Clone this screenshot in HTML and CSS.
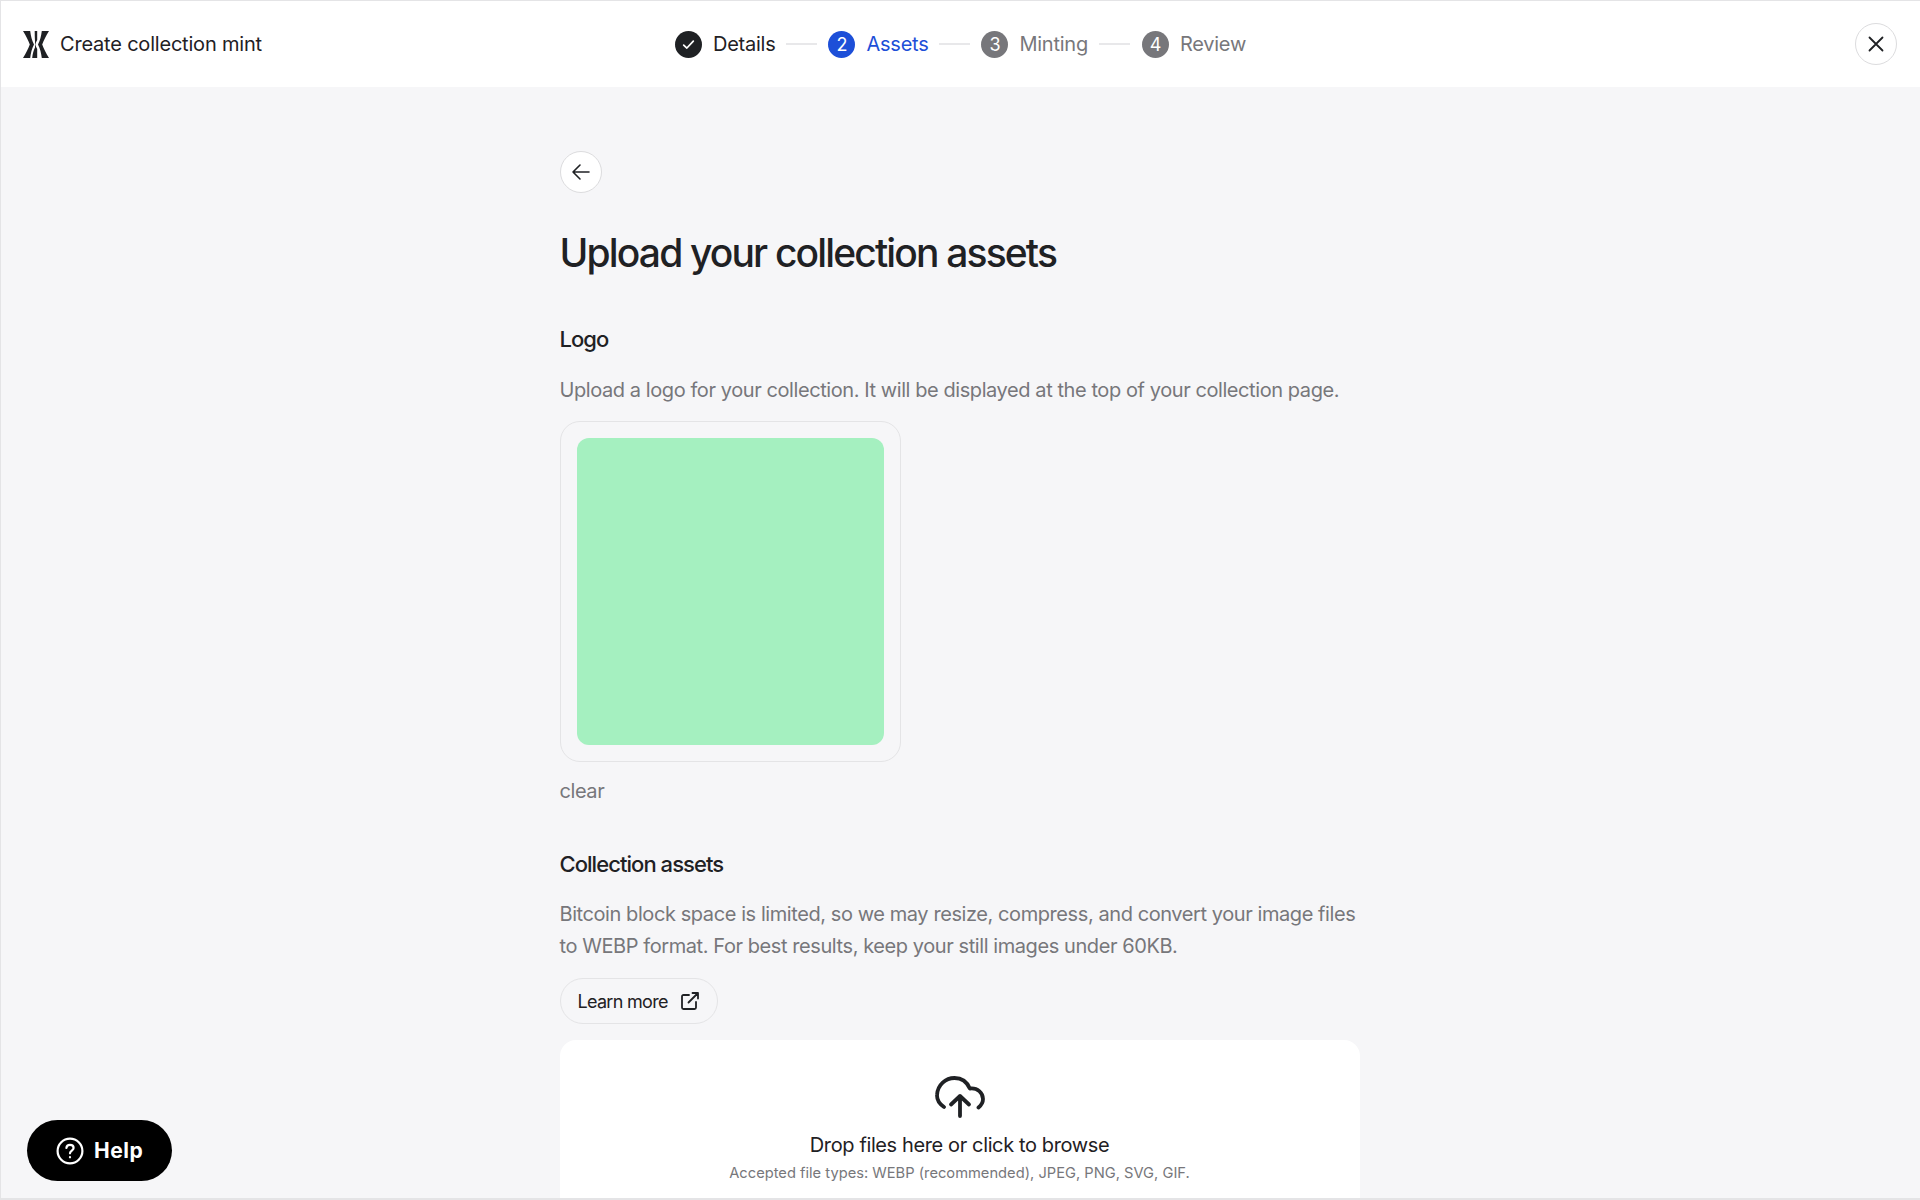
FILE: index.html
```html
<!DOCTYPE html>
<html lang="en">
<head>
    <meta charset="UTF-8">
    <meta name="viewport" content="width=device-width, initial-scale=1.0">
    <title>Create collection mint</title>
    <link rel="stylesheet" href="styles.css">
</head>
<body>

<div class="frame">
    <header class="topbar">
        <div class="brand">
            <svg class="brand-logo" width="26" height="27" viewBox="0 0 26 27">
                <path d="M0 0H7.200C7.800 5 8.800 9 11 13.500C8.800 18 7.800 22 7.200 27H0C3 22 5.200 18 6.800 13.500C5.200 9 3 5 0 0Z"/>
                <path d="M11.700 0H14.200V9C13.300 10.500 12.600 12 12.300 13.500C12.600 15 13.300 16.500 14.200 18V27H9.200C9.600 23 10.600 19 12 16.500V10.500C11.800 7 11.700 3.500 11.700 0Z"/>
                <path d="M26 0H18.800C18.200 5 17.200 9 15 13.500C17.200 18 18.200 22 18.800 27H26C23 22 20.800 18 19.200 13.500C20.800 9 23 5 26 0Z"/>
            </svg>
            <span class="brand-title">Create collection mint</span>
        </div>

        <ol class="steps">
            <li class="step step-done">
                <span class="step-dot">
                    <svg width="15" height="15" viewBox="0 0 14 14" fill="none" stroke="#fff" stroke-width="1.600" stroke-linecap="round" stroke-linejoin="round"><path d="M2.500 7.500L5.500 10.300L11.500 3.900"/></svg>
                </span>
                Details
            </li>
            <li class="step-line"></li>
            <li class="step step-active"><span class="step-dot">2</span>Assets</li>
            <li class="step-line"></li>
            <li class="step"><span class="step-dot">3</span>Minting</li>
            <li class="step-line"></li>
            <li class="step step-last"><span class="step-dot">4</span>Review</li>
        </ol>

        <button class="round-btn close-btn" type="button" aria-label="Close">
            <svg width="20" height="20" viewBox="0 0 20 20" fill="none" stroke="#1f2124" stroke-width="1.800" stroke-linecap="round"><path d="M3.500 3.500L16.500 16.500M16.500 3.500L3.500 16.500"/></svg>
        </button>
    </header>

    <main class="content">
        <button class="round-btn back-btn" type="button" aria-label="Back">
            <svg width="20" height="20" viewBox="0 0 20 20" fill="none" stroke="#1f2124" stroke-width="1.600" stroke-linecap="round" stroke-linejoin="round"><path d="M18 10H2M9 3L2 10L9 17"/></svg>
        </button>

        <h1>Upload your collection assets</h1>

        <section class="logo-section">
            <h2>Logo</h2>
            <p>Upload a logo for your collection. It will be displayed at the top of your collection page.</p>
            <div class="logo-box">
                <div class="logo-preview"></div>
            </div>
            <div class="clear-link">clear</div>
        </section>

        <section class="assets-section">
            <h2>Collection assets</h2>
            <p>Bitcoin block space is limited, so we may resize, compress, and convert your image files to WEBP format. For best results, keep your still images under 60KB.</p>
            <a class="learn-more" href="#">
                Learn more
                <svg width="20" height="20" viewBox="0 0 20 20" fill="none" stroke="#1f2124" stroke-width="1.800" stroke-linecap="round" stroke-linejoin="round"><path d="M9 4H3.500C2.700 4 2 4.700 2 5.500V16.500C2 17.300 2.700 18 3.500 18H14.500C15.300 18 16 17.300 16 16.500V11"/><path d="M8.500 11.500L18 2M12.500 2H18V7.500"/></svg>
            </a>

            <div class="dropzone">
                <svg width="50" height="42" viewBox="0 0 50 42" fill="none" stroke="#1f2124" stroke-width="3.800" stroke-linecap="round" stroke-linejoin="round"><path d="M9 31C3.800 27.500 1.600 23.500 2.100 18.500C2.800 9 10.500 2 19.500 2C26.500 2 32 6 34.800 12.500C42.500 11.500 48 17 48 23C48 26.500 46.500 29 43.500 31.500"/><path d="M25 40V20M16 28.500L25 20L34 28.500"/></svg>
                <div class="drop-title">Drop files here or click to browse</div>
                <div class="drop-note">Accepted file types: WEBP (recommended), JPEG, PNG, SVG, GIF.</div>
            </div>
        </section>
    </main>

    <button class="help-btn" type="button">
        <svg width="28" height="28" viewBox="0 0 28 28" fill="none" stroke="#fff" stroke-width="2.200" stroke-linecap="round"><circle cx="14" cy="14" r="12.400"/><path d="M10.400 11C10.600 8.900 12 7.900 14 7.900C16.100 7.900 17.600 9.100 17.600 11C17.600 13.500 14 13.700 14 16.300"/><path d="M14 20.200V20.300"/></svg>
        Help
    </button>
</div>

</body>
</html>
```

FILE: styles.css
```css
* {
    box-sizing: border-box;
}

html, body {
    margin: 0;
    padding: 0;
    height: 100%;
    overflow: hidden;
}

body {
    font-family: Inter, "Liberation Sans", sans-serif;
    color: #1f2124;
    background-color: #f6f6f8;
}

.frame {
    position: relative;
    height: 1200px;
    overflow: hidden;
    border-top: 1px solid #e4e4e6;
    border-left: 1px solid #e4e4e6;
    border-bottom: 2px solid #e4e4e6;
}

.topbar {
    position: relative;
    display: flex;
    align-items: center;
    justify-content: space-between;
    height: 86px;
    padding: 0 23px 0 22px;
    background-color: #fff;
}

.brand {
    display: flex;
    align-items: center;
    gap: 11px;
}

.brand-logo {
    fill: #1f2124;
}

.brand-title {
    font-size: 20px;
    letter-spacing: -0.2px;
}

.steps {
    position: absolute;
    left: 674px;
    top: 0;
    height: 86px;
    display: flex;
    align-items: center;
    gap: 11px;
    margin: 0;
    padding: 0;
    list-style: none;
}

.step {
    display: flex;
    align-items: center;
    gap: 11px;
    font-size: 20px;
    letter-spacing: -0.25px;
    color: #77777b;
}

.step-last {
    margin-left: 1px;
}

.step-dot {
    display: flex;
    align-items: center;
    justify-content: center;
    width: 27px;
    height: 27px;
    border-radius: 50%;
    background-color: #77777b;
    color: #fff;
    font-size: 18px;
}

.step-done {
    color: #1f2124;
}

.step-done .step-dot {
    background-color: #1f2124;
}

.step-active {
    color: #1d4fd8;
}

.step-active .step-dot {
    background-color: #1d4fd8;
}

.step-line {
    width: 31px;
    height: 2px;
    background-color: #e8e8ea;
}

.round-btn {
    display: flex;
    align-items: center;
    justify-content: center;
    width: 42px;
    height: 42px;
    padding: 0;
    border: 1px solid #dcdcde;
    border-radius: 50%;
    background-color: #fff;
}

.content {
    width: 800px;
    margin: 0 auto;
    padding-top: 64px;
    position: relative;
    left: -1px;
}

h1 {
    margin: 33px 0 0;
    font-size: 39px;
    line-height: 54px;
    font-weight: 500;
    letter-spacing: -1.850px;
}

h2 {
    margin: 0;
    font-size: 22px;
    line-height: 32px;
    font-weight: 500;
    letter-spacing: -0.950px;
}

p {
    margin: 19px 0 0;
    font-size: 20px;
    line-height: 32px;
    color: #77777b;
    letter-spacing: -0.420px;
}

.logo-section {
    margin-top: 43px;
}

.logo-box {
    width: 341px;
    height: 341px;
    margin-top: 15px;
    padding: 16px;
    border: 1px solid #e4e4e6;
    border-radius: 20px;
}

.logo-preview {
    width: 307px;
    height: 307px;
    border-radius: 12px;
    background-color: #a5f0c0;
}

.clear-link {
    margin-top: 13px;
    font-size: 20px;
    line-height: 32px;
    letter-spacing: -0.430px;
    color: #77777b;
}

.assets-section {
    margin-top: 41px;
}

.assets-section p {
    margin-top: 18px;
}

.learn-more {
    display: inline-flex;
    align-items: center;
    gap: 12px;
    height: 46px;
    margin-top: 16px;
    padding: 0 17px;
    border: 1px solid #e4e4e6;
    border-radius: 23px;
    font-size: 18px;
    letter-spacing: -0.700px;
    color: #1f2124;
    text-decoration: none;
}

.dropzone {
    display: flex;
    flex-direction: column;
    align-items: center;
    height: 220px;
    margin-top: 16px;
    padding-top: 36px;
    border-radius: 16px;
    background-color: #fff;
}

.drop-title {
    margin-top: 11px;
    font-size: 20px;
    line-height: 32px;
    letter-spacing: -0.380px;
}

.drop-note {
    margin-top: 1px;
    font-size: 14.700px;
    line-height: 22px;
    color: #77777b;
}

.help-btn {
    position: absolute;
    left: 26px;
    top: 1119px;
    display: flex;
    align-items: center;
    gap: 10px;
    width: 145px;
    height: 61px;
    padding: 0 0 0 29px;
    border: none;
    border-radius: 31px;
    background-color: #000;
    color: #fff;
    font-family: Inter, sans-serif;
    font-size: 21px;
    font-weight: 700;
    letter-spacing: 0.5px;
}
```
